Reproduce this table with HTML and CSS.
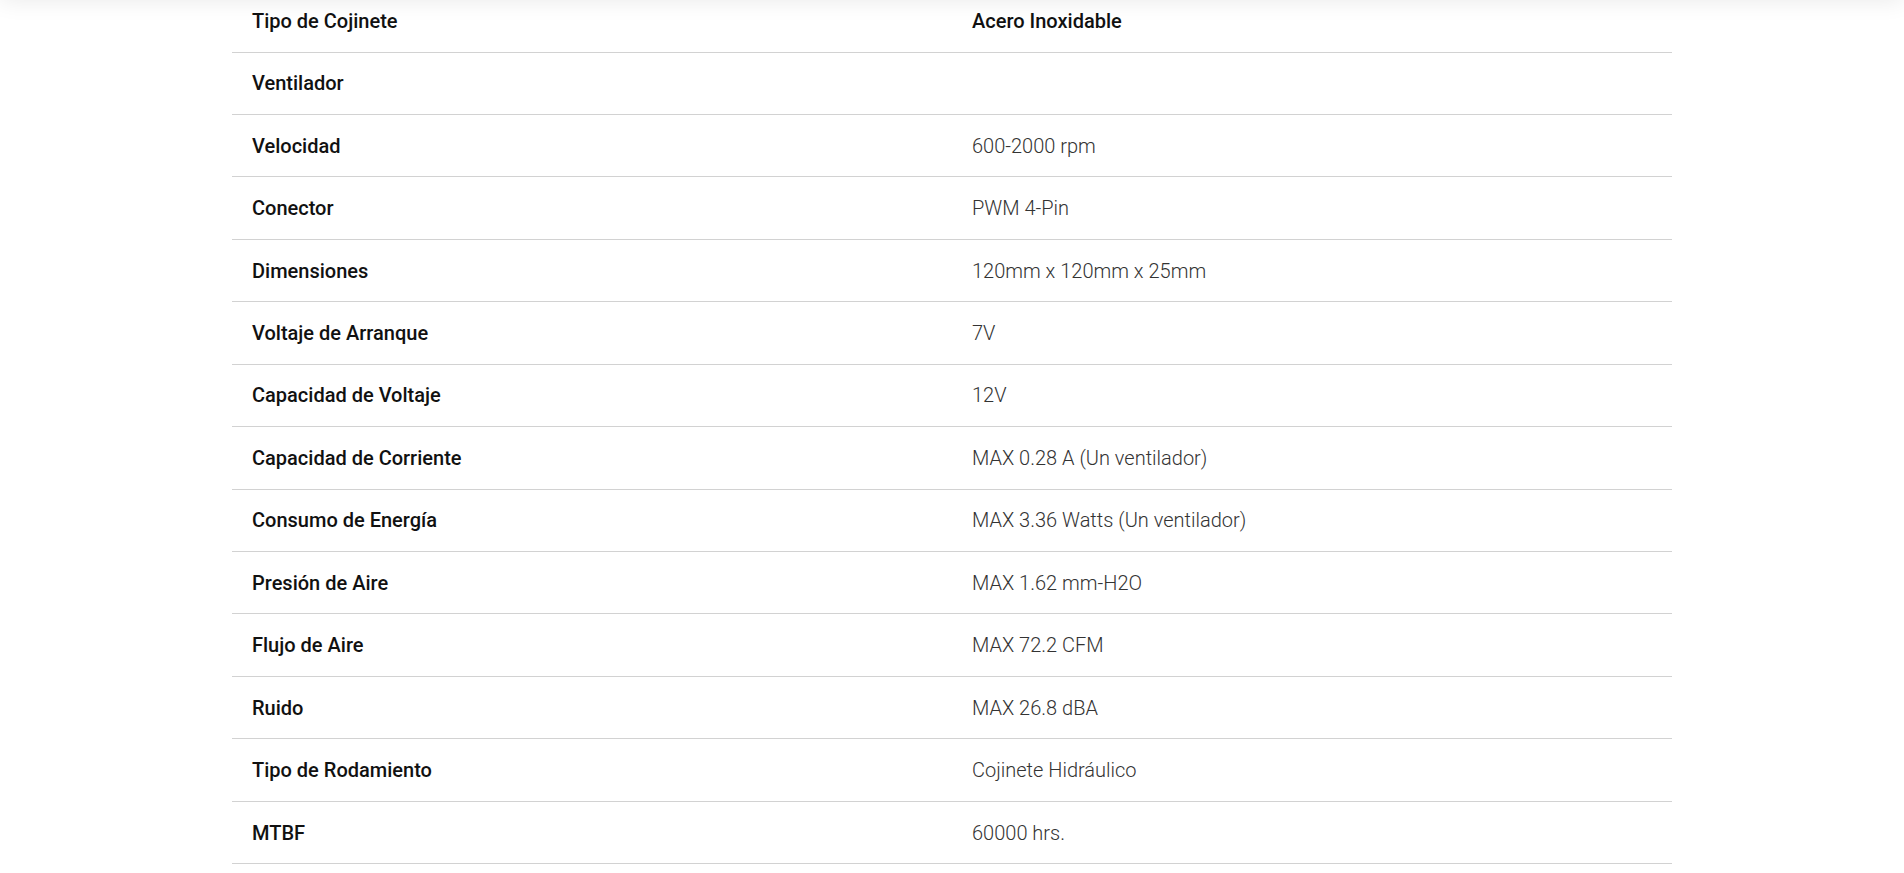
FILE: index.html
```html
<!DOCTYPE html>
<html lang="es">
<head>
    <meta charset="UTF-8">
    <meta name="viewport" content="width=device-width, initial-scale=1.0">
    <title>Especificaciones</title>
    <link rel="stylesheet" href="styles.css">
</head>
<body>
    <div class="top-bar"></div>

    <div class="container">
        <div class="spec-list">
            <div class="spec-row spec-head">
                <div class="spec-name">Tipo de Cojinete</div>
                <div class="spec-value">Acero Inoxidable</div>
            </div>
            <div class="spec-row">
                <div class="spec-name">Ventilador</div>
                <div class="spec-value"></div>
            </div>
            <div class="spec-row">
                <div class="spec-name">Velocidad</div>
                <div class="spec-value">600-2000 rpm</div>
            </div>
            <div class="spec-row">
                <div class="spec-name">Conector</div>
                <div class="spec-value">PWM 4-Pin</div>
            </div>
            <div class="spec-row">
                <div class="spec-name">Dimensiones</div>
                <div class="spec-value">120mm x 120mm x 25mm</div>
            </div>
            <div class="spec-row">
                <div class="spec-name">Voltaje de Arranque</div>
                <div class="spec-value">7V</div>
            </div>
            <div class="spec-row">
                <div class="spec-name">Capacidad de Voltaje</div>
                <div class="spec-value">12V</div>
            </div>
            <div class="spec-row">
                <div class="spec-name">Capacidad de Corriente</div>
                <div class="spec-value">MAX 0.28 A (Un ventilador)</div>
            </div>
            <div class="spec-row">
                <div class="spec-name">Consumo de Energía</div>
                <div class="spec-value">MAX 3.36 Watts (Un ventilador)</div>
            </div>
            <div class="spec-row">
                <div class="spec-name">Presión de Aire</div>
                <div class="spec-value">MAX 1.62 mm-H2O</div>
            </div>
            <div class="spec-row">
                <div class="spec-name">Flujo de Aire</div>
                <div class="spec-value">MAX 72.2 CFM</div>
            </div>
            <div class="spec-row">
                <div class="spec-name">Ruido</div>
                <div class="spec-value">MAX 26.8 dBA</div>
            </div>
            <div class="spec-row">
                <div class="spec-name">Tipo de Rodamiento</div>
                <div class="spec-value">Cojinete Hidráulico</div>
            </div>
            <div class="spec-row">
                <div class="spec-name">MTBF</div>
                <div class="spec-value">60000 hrs.</div>
            </div>
        </div>
    </div>
</body>
</html>
```

FILE: styles.css
```css
body {
    font-family: Roboto, 'Noto Sans', sans-serif;
    background: #fff;
    color: #111;
    margin: 0;
    padding: 0;
}
.top-bar {
    position: fixed;
    top: -40px;
    left: 0;
    right: 0;
    height: 40px;
    background: #fff;
    box-shadow: 0 0 24px rgba(0, 0, 0, 0.09);
    z-index: 10;
}
.container {
    max-width: 1440px;
    margin: -9.9px auto 0;
}
.spec-list {
    font-size: 20px;
    line-height: 30px;
}
.spec-row {
    display: grid;
    grid-template-columns: 1fr 1fr;
    border-bottom: 1px solid #d2d2d2;
}
.spec-name,
.spec-value {
    padding: 15.73px 20px;
    min-height: 30px;
}
.spec-name {
    font-weight: 500;
    color: #111;
}
.spec-value {
    font-weight: 300;
    color: #333;
}
.spec-head .spec-value {
    font-weight: 500;
    color: #111;
}
```
